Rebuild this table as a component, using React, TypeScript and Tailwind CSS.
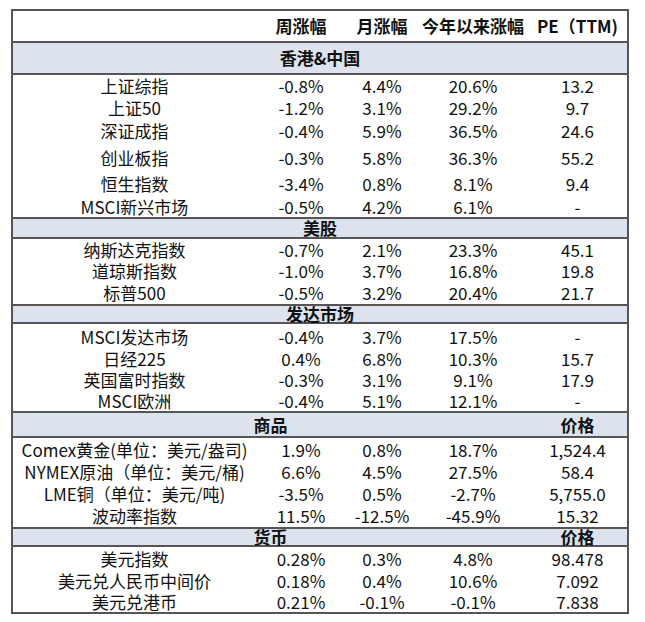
const font = { fontFamily: '"Noto Sans CJK SC", "Noto Sans", sans-serif' };

type Row = { name: string; w: string; m: string; y: string; pe: string; h: string };
type Section = { title: string; price?: boolean; h: string; rows: Row[] };

const sections: Section[] = [
  {
    title: '香港&中国',
    h: 'h-[34px]',
    rows: [
      { name: '上证综指', w: '-0.8%', m: '4.4%', y: '20.6%', pe: '13.2', h: 'h-[22px]' },
      { name: '上证50', w: '-1.2%', m: '3.1%', y: '29.2%', pe: '9.7', h: 'h-[21px]' },
      { name: '深证成指', w: '-0.4%', m: '5.9%', y: '36.5%', pe: '24.6', h: 'h-[26px]' },
      { name: '创业板指', w: '-0.3%', m: '5.8%', y: '36.3%', pe: '55.2', h: 'h-[28px]' },
      { name: '恒生指数', w: '-3.4%', m: '0.8%', y: '8.1%', pe: '9.4', h: 'h-[24px]' },
      { name: 'MSCI新兴市场', w: '-0.5%', m: '4.2%', y: '6.1%', pe: '-', h: 'h-[21px]' },
    ],
  },
  {
    title: '美股',
    h: 'h-[22px]',
    rows: [
      { name: '纳斯达克指数', w: '-0.7%', m: '2.1%', y: '23.3%', pe: '45.1', h: 'h-[21px]' },
      { name: '道琼斯指数', w: '-1.0%', m: '3.7%', y: '16.8%', pe: '19.8', h: 'h-[22px]' },
      { name: '标普500', w: '-0.5%', m: '3.2%', y: '20.4%', pe: '21.7', h: 'h-[22px]' },
    ],
  },
  {
    title: '发达市场',
    h: 'h-[20px]',
    rows: [
      { name: 'MSCI发达市场', w: '-0.4%', m: '3.7%', y: '17.5%', pe: '-', h: 'h-[25px]' },
      { name: '日经225', w: '0.4%', m: '6.8%', y: '10.3%', pe: '15.7', h: 'h-[20px]' },
      { name: '英国富时指数', w: '-0.3%', m: '3.1%', y: '9.1%', pe: '17.9', h: 'h-[21px]' },
      { name: 'MSCI欧洲', w: '-0.4%', m: '5.1%', y: '12.1%', pe: '-', h: 'h-[21px]' },
    ],
  },
  {
    title: '商品',
    price: true,
    h: 'h-[27px]',
    rows: [
      { name: 'Comex黄金(单位：美元/盎司)', w: '1.9%', m: '0.8%', y: '18.7%', pe: '1,524.4', h: 'h-[23px]' },
      { name: 'NYMEX原油（单位：美元/桶)', w: '6.6%', m: '4.5%', y: '27.5%', pe: '58.4', h: 'h-[22px]' },
      { name: 'LME铜（单位：美元/吨)', w: '-3.5%', m: '0.5%', y: '-2.7%', pe: '5,755.0', h: 'h-[22px]' },
      { name: '波动率指数', w: '11.5%', m: '-12.5%', y: '-45.9%', pe: '15.32', h: 'h-[22px]' },
    ],
  },
  {
    title: '货币',
    price: true,
    h: 'h-[20px]',
    rows: [
      { name: '美元指数', w: '0.28%', m: '0.3%', y: '4.8%', pe: '98.478', h: 'h-[24px]' },
      { name: '美元兑人民币中间价', w: '0.18%', m: '0.4%', y: '10.6%', pe: '7.092', h: 'h-[20px]' },
      { name: '美元兑港币', w: '0.21%', m: '-0.1%', y: '-0.1%', pe: '7.838', h: 'h-[21px]' },
    ],
  },
];

const cols = 'grid grid-cols-[243px_90px_72px_110px_1fr]';

export default function App() {
  return (
    <div className="bg-white w-[645px] h-[622px] pt-[9px] pl-[11px]" style={font}>
      <div className="w-[618px] border-2 border-[#555] text-[#111] text-[17px] leading-[18px]">
        <div className={`${cols} h-[30px] items-center font-bold text-[17px]`}>
          <div />
          <div className="text-center">周涨幅</div>
          <div className="text-center">月涨幅</div>
          <div className="text-center whitespace-nowrap">今年以来涨幅</div>
          <div className="text-center whitespace-nowrap">PE（TTM)</div>
        </div>
        {sections.map((s) => (
          <div key={s.title}>
            <div className={`${cols} ${s.h} items-center bg-[#dce3ef] border-y-2 border-[#555] font-bold text-[17px] leading-[16px]`}>
              {s.price ? (
                <>
                  <div className="col-span-4 text-center">{s.title}</div>
                  <div className="text-center">价格</div>
                </>
              ) : (
                <div className="col-span-5 text-center">{s.title}</div>
              )}
            </div>
            {s.rows.map((r) => (
              <div key={r.name} className={`${cols} ${r.h} items-center`}>
                <div className="flex justify-center whitespace-nowrap">{r.name}</div>
                <div className="text-center">{r.w}</div>
                <div className="text-center">{r.m}</div>
                <div className="text-center">{r.y}</div>
                <div className="text-center">{r.pe}</div>
              </div>
            ))}
          </div>
        ))}
      </div>
    </div>
  );
}
